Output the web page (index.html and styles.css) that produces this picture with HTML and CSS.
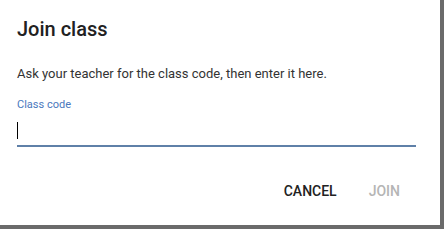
FILE: index.html
```html
<!DOCTYPE html>
<html lang="en">
<head>
    <meta charset="UTF-8">
    <title>Join class</title>
    <link rel="stylesheet" href="styles.css">
</head>
<body>
    <div class="dialog">
        <h2 class="dialog-title">Join class</h2>
        <p class="dialog-text">Ask your teacher for the class code, then enter it here.</p>
        <div class="field">
            <label class="field-label" for="code">Class code</label>
            <div class="field-input">
                <span class="caret"></span>
            </div>
        </div>
        <div class="actions">
            <span class="btn">CANCEL</span>
            <span class="btn btn-disabled">JOIN</span>
        </div>
    </div>
</body>
</html>
```

FILE: styles.css
```css
* {
    padding: 0;
    margin: 0;
    box-sizing: border-box;
}

body {
    background: #fff;
    font-family: Roboto, "Liberation Sans", sans-serif;
}

.dialog {
    width: 444px;
    height: 229px;
    background: #fff;
    border-right: 4px solid #6b6b6b;
    border-bottom: 4px solid #6b6b6b;
    padding: 16px 24px 0 17px;
    display: flex;
    flex-direction: column;
}

.dialog-title {
    font-size: 20px;
    font-weight: 500;
    line-height: 26px;
    color: #212121;
}

.dialog-text {
    margin-top: 23px;
    font-size: 13px;
    line-height: 18px;
    color: #333;
}

.field {
    margin-top: 15px;
    width: 399px;
}

.field-label {
    display: block;
    font-size: 11px;
    line-height: 14px;
    color: #4a78bd;
}

.field-input {
    height: 35px;
    padding-top: 10px;
    border-bottom: 2px solid #5f80a8;
}

.caret {
    display: block;
    width: 1px;
    height: 17px;
    background: #000;
}

.actions {
    margin-top: 36px;
    display: flex;
    justify-content: flex-end;
    gap: 32px;
    padding-right: 16px;
}

.btn {
    font-size: 14px;
    font-weight: 500;
    line-height: 16px;
    color: #222;
}

.btn-disabled {
    color: #b5b5b5;
}
```
